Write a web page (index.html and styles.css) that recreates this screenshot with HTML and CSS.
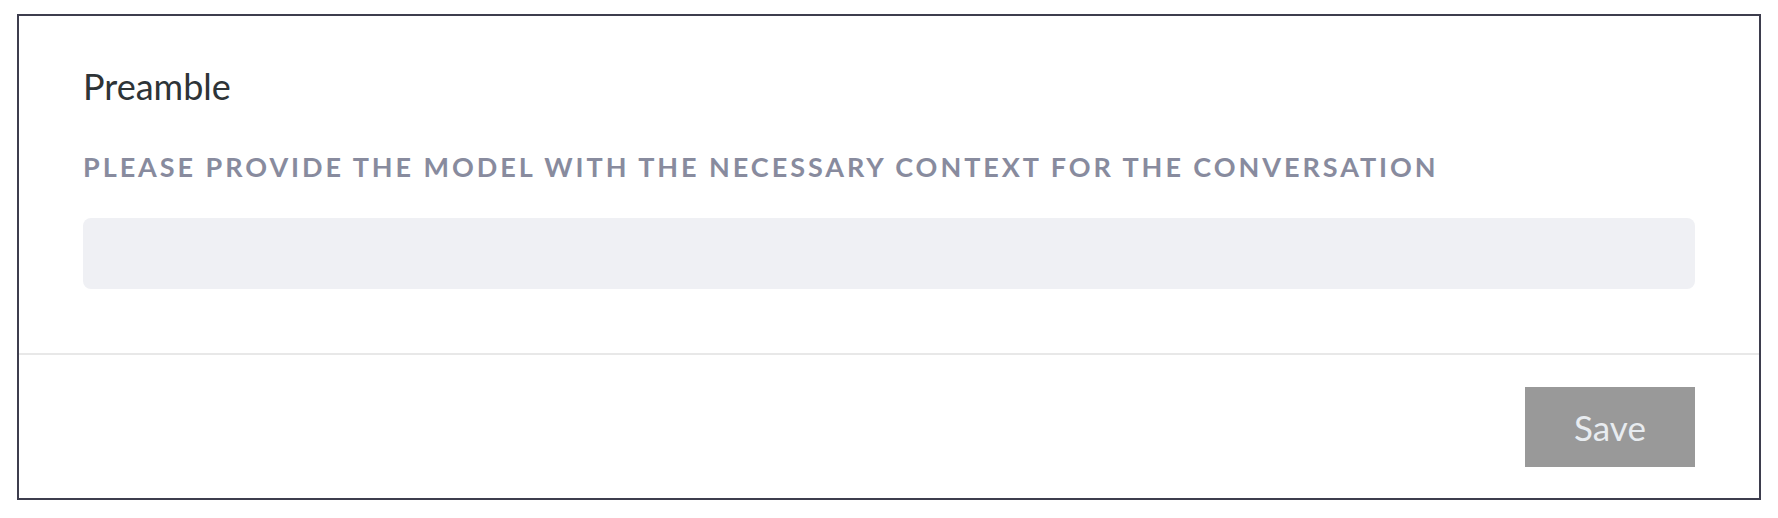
FILE: index.html
```html
<!DOCTYPE html>
<html>
<head>
<meta charset="utf-8">
<link rel="stylesheet" href="styles.css">
</head>
<body>
<div class="panel">
  <div class="content">
    <h2 class="title">Preamble</h2>
    <div class="label">Please provide the model with the necessary context for the conversation</div>
    <div class="input"></div>
  </div>
  <div class="footer">
    <button class="save">Save</button>
  </div>
</div>
</body>
</html>
```
FILE: styles.css
```css
html, body {
  margin: 0;
  padding: 0;
  background: #ffffff;
}
body {
  padding: 14px 17px 17px 17px;
  font-family: Lato, "Noto Sans", sans-serif;
}
.panel {
  border: 2px solid #3d3d4d;
  display: flex;
  flex-direction: column;
  background: #fff;
}
.content {
  padding: 49px 64px 64px 64px;
  border-bottom: 2px solid #e8e8e8;
}
.title {
  margin: 0;
  font-size: 36px;
  font-weight: 400;
  line-height: 43px;
  color: #2e3437;
}
.label {
  margin-top: 43px;
  font-size: 27px;
  font-weight: 700;
  line-height: 32px;
  letter-spacing: 2.95px;
  text-transform: uppercase;
  color: #888b9e;
}
.input {
  margin-top: 35px;
  height: 71px;
  border-radius: 8px;
  background: #eff0f4;
}
.footer {
  padding: 32px 64px 31px 64px;
  display: flex;
  justify-content: flex-end;
}
.save {
  width: 170px;
  height: 80px;
  border: none;
  background: #999999;
  color: #e8ecf0;
  font-family: Lato, sans-serif;
  font-size: 35px;
  padding: 0;
}
```
